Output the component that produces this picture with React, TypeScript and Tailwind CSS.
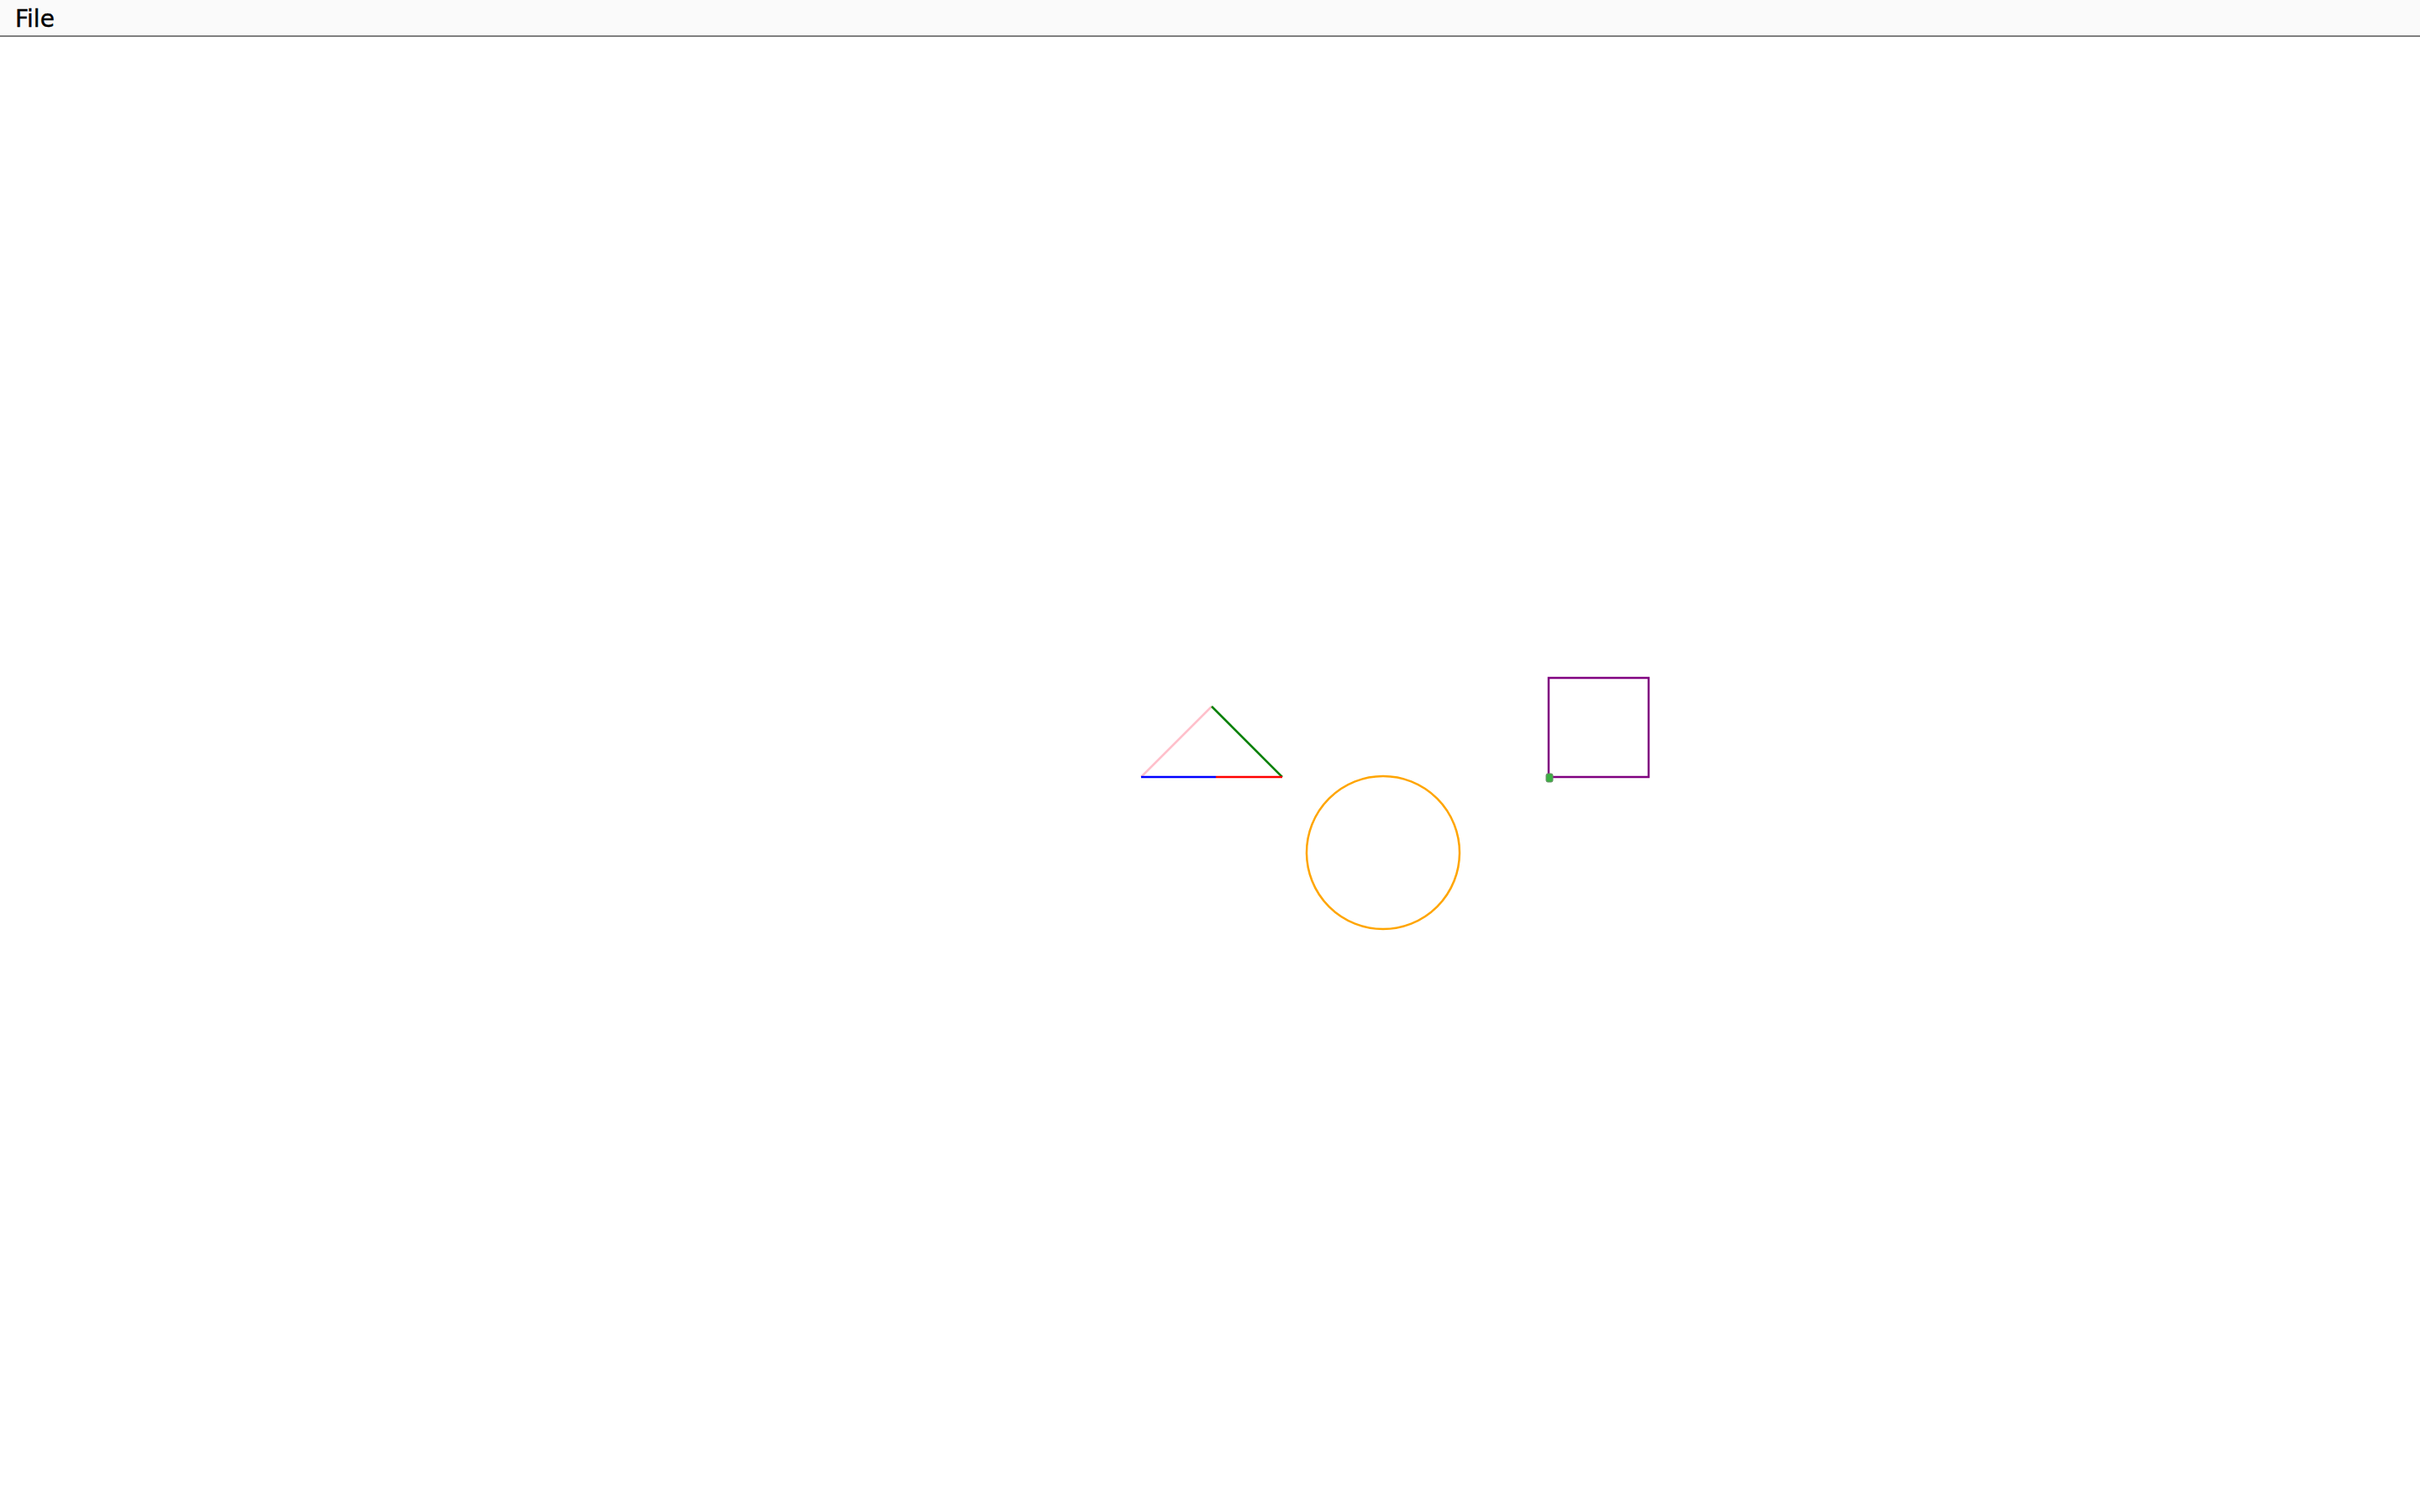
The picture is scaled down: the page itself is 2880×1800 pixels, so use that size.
import React from "react";

export default function App() {
  return (
    <div className="w-[2880px] h-[1800px] bg-white overflow-hidden flex flex-col">
      <div className="h-[44px] shrink-0 bg-[#fafafa] border-b-2 border-[#808080] flex items-center px-[18px]">
        <span className="text-[28px] leading-none text-black font-['DejaVu_Sans',sans-serif] [-webkit-text-stroke:0.4px_black] mt-[3px]">File</span>
      </div>
      <div className="relative flex-1">
        <svg className="absolute inset-0" width="2880" height="1756" viewBox="0 0 2880 1756">
          <line x1="1358" y1="881" x2="1442" y2="797" stroke="#ffc0cb" strokeWidth="2.5" />
          <line x1="1442" y1="797" x2="1526" y2="881" stroke="#008000" strokeWidth="2.5" />
          <line x1="1358" y1="881" x2="1447" y2="881" stroke="#0000ff" strokeWidth="2.5" />
          <line x1="1447" y1="881" x2="1526" y2="881" stroke="#ff0000" strokeWidth="2.5" />
          <circle cx="1646" cy="971" r="91" fill="none" stroke="#ffa500" strokeWidth="2.5" />
          <rect x="1843" y="763" width="119" height="118" fill="none" stroke="#800080" strokeWidth="2.5" />
          <rect x="1840" y="877" width="8" height="10" rx="2" fill="#3cb043" stroke="#6a8a6a" strokeWidth="1" />
        </svg>
      </div>
    </div>
  );
}
